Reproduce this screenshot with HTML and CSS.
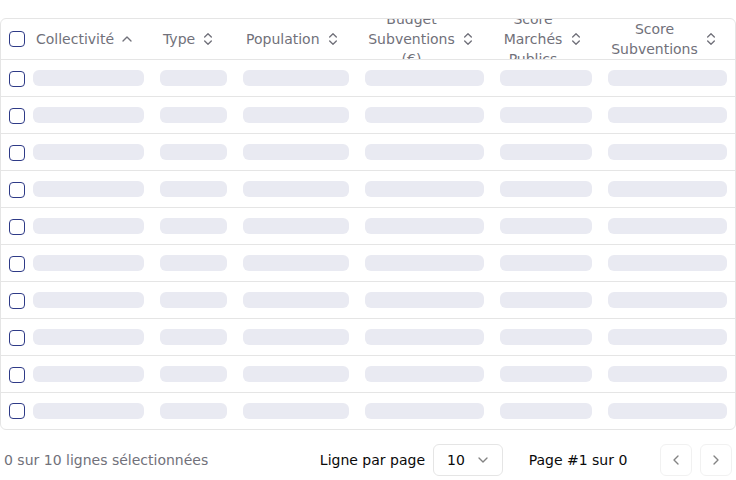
FILE: index.html
```html
<!DOCTYPE html>
<html lang="fr">
<head>
<meta charset="utf-8">
<link rel="stylesheet" href="styles.css">
</head>
<body>
<div class="page">
  <div class="table-wrap">
    <table class="data-table">
      <colgroup>
        <col class="c-check"><col class="c1"><col class="c2"><col class="c3"><col class="c4"><col class="c5"><col class="c6">
      </colgroup>
      <thead>
        <tr>
          <th class="cell-check"><div class="head-inner"><span class="checkbox"></span></div></th>
          <th><div class="head-inner"><button class="sort-btn"><span class="sort-label">Collectivité</span><svg class="icon" viewBox="0 0 24 24"><path d="m18 15-6-6-6 6"/></svg></button></div></th>
          <th><div class="head-inner"><button class="sort-btn"><span class="sort-label">Type</span><svg class="icon" viewBox="0 0 24 24"><path d="m7 15 5 5 5-5"/><path d="m7 9 5-5 5 5"/></svg></button></div></th>
          <th><div class="head-inner"><button class="sort-btn"><span class="sort-label">Population</span><svg class="icon" viewBox="0 0 24 24"><path d="m7 15 5 5 5-5"/><path d="m7 9 5-5 5 5"/></svg></button></div></th>
          <th><div class="head-inner"><button class="sort-btn wide"><span class="sort-label">Budget Subventions (€)</span><svg class="icon" viewBox="0 0 24 24"><path d="m7 15 5 5 5-5"/><path d="m7 9 5-5 5 5"/></svg></button></div></th>
          <th><div class="head-inner"><button class="sort-btn wide"><span class="sort-label">Score Marchés Publics</span><svg class="icon" viewBox="0 0 24 24"><path d="m7 15 5 5 5-5"/><path d="m7 9 5-5 5 5"/></svg></button></div></th>
          <th><div class="head-inner"><button class="sort-btn wide"><span class="sort-label">Score Subventions</span><svg class="icon" viewBox="0 0 24 24"><path d="m7 15 5 5 5-5"/><path d="m7 9 5-5 5 5"/></svg></button></div></th>
        </tr>
      </thead>
      <tbody>
        <tr><td class="cell-check"><span class="checkbox"></span></td><td><div class="skel"></div></td><td><div class="skel"></div></td><td><div class="skel"></div></td><td><div class="skel"></div></td><td><div class="skel"></div></td><td><div class="skel"></div></td></tr>
        <tr><td class="cell-check"><span class="checkbox"></span></td><td><div class="skel"></div></td><td><div class="skel"></div></td><td><div class="skel"></div></td><td><div class="skel"></div></td><td><div class="skel"></div></td><td><div class="skel"></div></td></tr>
        <tr><td class="cell-check"><span class="checkbox"></span></td><td><div class="skel"></div></td><td><div class="skel"></div></td><td><div class="skel"></div></td><td><div class="skel"></div></td><td><div class="skel"></div></td><td><div class="skel"></div></td></tr>
        <tr><td class="cell-check"><span class="checkbox"></span></td><td><div class="skel"></div></td><td><div class="skel"></div></td><td><div class="skel"></div></td><td><div class="skel"></div></td><td><div class="skel"></div></td><td><div class="skel"></div></td></tr>
        <tr><td class="cell-check"><span class="checkbox"></span></td><td><div class="skel"></div></td><td><div class="skel"></div></td><td><div class="skel"></div></td><td><div class="skel"></div></td><td><div class="skel"></div></td><td><div class="skel"></div></td></tr>
        <tr><td class="cell-check"><span class="checkbox"></span></td><td><div class="skel"></div></td><td><div class="skel"></div></td><td><div class="skel"></div></td><td><div class="skel"></div></td><td><div class="skel"></div></td><td><div class="skel"></div></td></tr>
        <tr><td class="cell-check"><span class="checkbox"></span></td><td><div class="skel"></div></td><td><div class="skel"></div></td><td><div class="skel"></div></td><td><div class="skel"></div></td><td><div class="skel"></div></td><td><div class="skel"></div></td></tr>
        <tr><td class="cell-check"><span class="checkbox"></span></td><td><div class="skel"></div></td><td><div class="skel"></div></td><td><div class="skel"></div></td><td><div class="skel"></div></td><td><div class="skel"></div></td><td><div class="skel"></div></td></tr>
        <tr><td class="cell-check"><span class="checkbox"></span></td><td><div class="skel"></div></td><td><div class="skel"></div></td><td><div class="skel"></div></td><td><div class="skel"></div></td><td><div class="skel"></div></td><td><div class="skel"></div></td></tr>
        <tr><td class="cell-check"><span class="checkbox"></span></td><td><div class="skel"></div></td><td><div class="skel"></div></td><td><div class="skel"></div></td><td><div class="skel"></div></td><td><div class="skel"></div></td><td><div class="skel"></div></td></tr>
      </tbody>
    </table>
  </div>
  <div class="footer">
    <div class="selected-info">0 sur 10 lignes sélectionnées</div>
    <div class="pager">
      <span class="pager-label">Ligne par page</span>
      <div class="select"><span>10</span><svg class="icon chev" viewBox="0 0 24 24"><path d="m6 9 6 6 6-6"/></svg></div>
      <div class="page-info">Page #1 sur 0</div>
      <div class="nav">
        <button class="nav-btn"><svg class="icon" viewBox="0 0 24 24"><path d="m15 18-6-6 6-6"/></svg></button>
        <button class="nav-btn"><svg class="icon" viewBox="0 0 24 24"><path d="m9 18 6-6-6-6"/></svg></button>
      </div>
    </div>
  </div>
</div>
</body>
</html>
```
FILE: styles.css
```css
* { box-sizing: border-box; }
html, body { margin: 0; padding: 0; background: #fff; }
body {
  font-family: "DejaVu Sans", sans-serif;
  font-size: 14px;
  color: #0a0a0a;
}
.page { padding-top: 18px; }
.table-wrap {
  border: 1px solid #e5e5e5;
  border-radius: 6px;
  overflow: hidden;
}
.data-table {
  width: 100%;
  table-layout: fixed;
  border-collapse: collapse;
  border-spacing: 0;
}
.c-check { width: 24px; }
.c1 { width: 127px; }
.c2 { width: 83px; }
.c3 { width: 122px; }
.c4 { width: 135px; }
.c5 { width: 108px; }
.c6 { width: 135px; }
th, td { padding: 0 8px; }
th.cell-check, td.cell-check { padding: 0 0 0 8px; }
thead tr { border-bottom: 1px solid #e5e5e5; }
tbody tr { border-bottom: 1px solid #e5e5e5; height: 37px; }
tbody tr:last-child { border-bottom: none; height: 36px; }
th { font-weight: normal; text-align: left; }
.head-inner {
  height: 40px;
  overflow: hidden;
  display: flex;
  align-items: center;
}
.sort-btn {
  display: flex;
  align-items: center;
  gap: 5px;
  border: none;
  background: none;
  font: inherit;
  font-size: 14px;
  line-height: 20px;
  color: #71717a;
  padding: 0 8px 0 3px;
  max-width: 100%;
  text-align: center;
}
.sort-btn.wide { width: 100%; }
.sort-label { flex: 1 1 auto; min-width: 0; }
.icon {
  width: 16px;
  height: 16px;
  flex: none;
  fill: none;
  stroke: currentColor;
  stroke-width: 2;
  stroke-linecap: round;
  stroke-linejoin: round;
}
.checkbox {
  display: block;
  width: 16px;
  height: 16px;
  border: 1px solid #2e3a87;
  border-radius: 4px;
}
td .checkbox { margin-top: 1px; }
.skel {
  height: 16px;
  border-radius: 6px;
  background: #e9eaf2;
}
.footer {
  display: flex;
  justify-content: space-between;
  align-items: center;
  padding: 0 4px;
  margin-top: 14px;
}
.selected-info { color: #71717a; }
.pager { display: flex; align-items: center; }
.pager-label { margin-right: 8px; }
.select {
  width: 70px;
  height: 32px;
  border: 1px solid #e5e5e5;
  border-radius: 6px;
  display: flex;
  align-items: center;
  justify-content: space-between;
  padding: 0 11px 0 13px;
}
.chev { opacity: 0.5; }
.page-info {
  width: 100px;
  margin-left: 25px;
  text-align: center;
  white-space: nowrap;
}
.nav { display: flex; gap: 8px; margin-left: 32px; }
.nav-btn {
  width: 32px;
  height: 32px;
  border: 1px solid #e5e5e5;
  border-radius: 6px;
  background: #fff;
  opacity: 0.5;
  display: flex;
  align-items: center;
  justify-content: center;
  padding: 0;
  color: #0a0a0a;
}
```
